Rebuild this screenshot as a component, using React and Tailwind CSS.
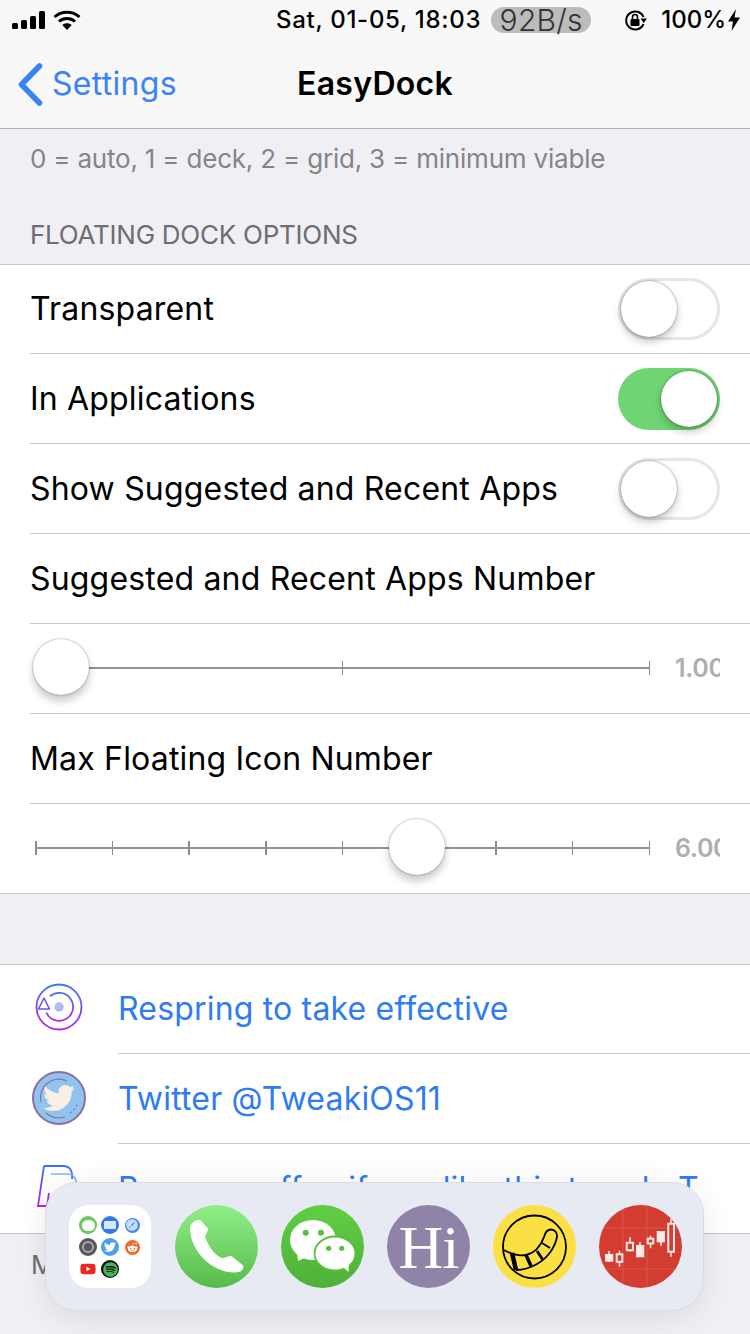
import React from "react";
import { FaTwitter, FaRedditAlien, FaSpotify, FaYoutube, FaSafari } from "react-icons/fa";

const font = { fontFamily: "Inter, 'Noto Sans', sans-serif" };

function Toggle({ on }) {
  return (
    <div className={on ? "relative w-[102px] h-[62px] rounded-full bg-[#6fd572]" : "relative w-[102px] h-[62px] rounded-full border-[3px] border-[#e6e6e6] bg-white"}>
      <div className={on
        ? "absolute top-[3px] right-[3px] w-[56px] h-[56px] rounded-full bg-white shadow-[0_5px_8px_rgba(0,0,0,0.22),0_0_2px_rgba(0,0,0,0.5)]"
        : "absolute top-0 left-0 w-[56px] h-[56px] rounded-full bg-white shadow-[0_5px_8px_rgba(0,0,0,0.22),0_0_2px_rgba(0,0,0,0.5)]"} />
    </div>
  );
}

function Row({ label, children, first }) {
  return (
    <div className={"ml-[30px] flex items-center pr-[30px] border-b border-[#c8c7cc] " + (first ? "h-[89px]" : "h-[90px]")}>
      <span className="flex-1 text-[32px] leading-none tracking-[0.18px] text-black whitespace-nowrap">{label}</span>
      {children}
    </div>
  );
}

function Slider({ ticks, left, value, last }) {
  return (
    <div className={"ml-[30px] flex items-center pr-[30px] pl-[5px] " + (last ? "h-[89px]" : "h-[90px] border-b border-[#c8c7cc]")}>
      <div className="relative w-[615px] h-[14px] mb-[2px] flex justify-between items-center">
        <div className="absolute left-0 right-0 top-[6px] h-[2px] bg-[#939393]" />
        {ticks.map((t, i) => (
          <div key={i} className={"w-[1.5px] h-[14px] " + (t ? "bg-[#8a8a8a]" : "bg-transparent")} />
        ))}
        <div className={"absolute top-[-22px] w-[56px] h-[56px] rounded-full bg-white shadow-[0_6px_9px_rgba(0,0,0,0.22),0_0_2px_rgba(0,0,0,0.45)] " + left} />
      </div>
      <div className="ml-[25px] w-[45px] overflow-hidden text-[25px] leading-none font-semibold text-[#aeaeb0] whitespace-nowrap tracking-[-0.3px]">{value}</div>
    </div>
  );
}

function Signal() {
  return (
    <svg width="34" height="18" viewBox="0 0 34 18">
      <rect x="0" y="12" width="6" height="6" rx="1.5" />
      <rect x="9" y="9" width="6" height="9" rx="1.5" />
      <rect x="18" y="5" width="6" height="13" rx="1.5" />
      <rect x="27" y="0" width="6" height="18" rx="1.5" />
    </svg>
  );
}

function Wifi() {
  return (
    <svg width="28" height="20" viewBox="0 0 28 20" fill="none" stroke="#000" strokeWidth="3">
      <path d="M1.5 7 C8.5 0.5 19.5 0.5 26.5 7" />
      <path d="M6 11.5 C10.5 7.5 17.5 7.5 22 11.5" />
      <path d="M14 20 L9.3 15 C12 12.7 16 12.7 18.7 15 Z" fill="#000" stroke="none" />
    </svg>
  );
}

function RotLock() {
  return (
    <svg width="23" height="23" viewBox="0 0 23 23">
      <path d="M19.5 8 A9 9 0 1 0 19.5 15" fill="none" stroke="#000" strokeWidth="2" />
      <path d="M16.5 9.5 L23 9.5 L19.7 14 Z" />
      <rect x="6.5" y="10" width="9" height="7" rx="1" />
      <path d="M8.5 10 V8 A2.5 2.5 0 0 1 13.5 8 V10" fill="none" stroke="#000" strokeWidth="1.6" />
    </svg>
  );
}

function StatusBar() {
  return (
    <div className="h-[40px] flex items-center text-black">
      <div className="ml-[12px] flex items-center"><Signal /></div>
      <div className="ml-[7px] flex items-center"><Wifi /></div>
      <span className="ml-[195px] text-[24px] leading-none font-medium tracking-[0.7px] whitespace-nowrap">Sat, 01-05, 18:03</span>
      <span className="ml-[10px] w-[100px] h-[26px] rounded-[13px] bg-[#bcbcbc] text-[#333] text-[30px] leading-[26px] font-light tracking-[0.3px] text-center whitespace-nowrap">92B/s</span>
      <div className="ml-[33px] flex items-center"><RotLock /></div>
      <span className="ml-[14px] text-[24px] leading-none font-medium whitespace-nowrap">100%</span>
      <svg className="ml-[2px]" width="12" height="22" viewBox="0 0 12 22"><path d="M8 0 L0 12.5 H5 L3.5 22 L12 8.5 H6.5 Z" /></svg>
    </div>
  );
}

function NavBar() {
  return (
    <div className="h-[129px] bg-[#f8f8f8] border-b border-[#b2b2b2]">
      <StatusBar />
      <div className="h-[88px] grid grid-cols-[1fr_auto_1fr] items-center">
        <div className="flex items-center pl-[18px] text-[#3b82f6]">
          <svg width="25" height="43" viewBox="0 0 25 43" fill="none" stroke="#3b82f6" strokeWidth="5.6" strokeLinecap="round" strokeLinejoin="round">
            <path d="M21.5 3 L3.5 21.5 L21.5 40" />
          </svg>
          <span className="ml-[9px] text-[32px] leading-none tracking-[0.3px]">Settings</span>
        </div>
        <span className="text-[32px] leading-none font-semibold tracking-[0.27px] text-black">EasyDock</span>
        <div />
      </div>
    </div>
  );
}

function RespringIcon() {
  return (
    <svg width="50" height="50" viewBox="0 0 50 50" fill="none">
      <defs>
        <linearGradient id="rg" x1="0" y1="0" x2="0" y2="1">
          <stop offset="0" stopColor="#4272f7" />
          <stop offset="1" stopColor="#b22be8" />
        </linearGradient>
        <linearGradient id="rd" x1="0" y1="0" x2="1" y2="1">
          <stop offset="0" stopColor="#a8cdf9" />
          <stop offset="1" stopColor="#bcaaf7" />
        </linearGradient>
      </defs>
      <circle cx="25" cy="25" r="22.5" stroke="url(#rg)" strokeWidth="1.8" />
      <path d="M12.3 30.5 A14 14 0 1 0 16 14.2" stroke="url(#rg)" strokeWidth="1.8" />
      <path d="M10 16 L15.5 27 L4.5 27 Z" stroke="#6a55f0" strokeWidth="1.6" strokeLinejoin="round" fill="#fff" />
      <circle cx="25" cy="25" r="4.7" fill="url(#rd)" />
    </svg>
  );
}

function TwitterBadge() {
  return (
    <div className="relative w-[54px] h-[54px] rounded-full bg-[#90c3ee] border-2 border-[#8a6f9c] flex items-center justify-center">
      <svg className="absolute inset-[3px]" viewBox="0 0 44 44" fill="none" stroke="#8a6f9c" strokeWidth="1.1">
        <path d="M4 26 A18.5 18.5 0 0 1 30 5" />
        <path d="M9 37 A20 20 0 0 0 28 41" />
        <path d="M33 37 A19 19 0 0 0 41 27" strokeDasharray="2 2.5" />
      </svg>
      <FaTwitter className="relative text-[#f8f0e4] text-[32px]" />
    </div>
  );
}

function PaypalIcon() {
  return (
    <svg width="44" height="46" viewBox="0 0 44 46" fill="none">
      <defs>
        <linearGradient id="pg" x1="0" y1="0" x2="0" y2="1">
          <stop offset="0" stopColor="#3a70f6" />
          <stop offset="1" stopColor="#b32be6" />
        </linearGradient>
      </defs>
      <path d="M7 1 H26 C33 1 36 6 35 14 M7 1 L1 41 H10 L12 28" stroke="url(#pg)" strokeWidth="1.8" />
      <path d="M14 9 H30 C37 9 40 14 39 20 C38 26 33 30 26 30 H18" stroke="#7db3f5" strokeWidth="1.6" />
    </svg>
  );
}

function IconRow({ icon, label, last, first, lift }) {
  return (
    <div className={"flex items-center " + (first || last ? "h-[89px]" : "h-[90px]")}>
      <div className={"w-[118px] shrink-0 flex justify-center " + lift}>{icon}</div>
      <div className={"flex-1 min-w-0 h-full flex items-center " + (last ? "" : "border-b border-[#c8c7cc]")}>
        <span className="text-[32px] leading-none tracking-[0.18px] text-[#2f7bf5] whitespace-nowrap">{label}</span>
      </div>
    </div>
  );
}

function Mini({ children, className }) {
  return <div className={"rounded-full flex items-center justify-center " + className}>{children}</div>;
}

function Folder() {
  return (
    <div className="w-[82px] h-[83px] rounded-[20px] bg-white pl-[8px] pt-[9px] grid grid-cols-[22px_22px_22px] grid-rows-[22px_22px_22px] place-items-center">
      <Mini className="w-[18px] h-[18px] bg-[#68c860]"><div className="w-[13px] h-[11px] rounded-full bg-white" /></Mini>
      <Mini className="w-[18px] h-[18px] bg-[#2f7be8]"><div className="w-[12px] h-[8px] bg-[#d9e8fb] rounded-[1px]" /></Mini>
      <Mini className="w-[15px] h-[15px] bg-[#3f87ea]"><FaSafari className="text-[#cfe3fb] text-[12px]" /></Mini>
      <Mini className="w-[18px] h-[18px] bg-[#58585c]"><div className="w-[12px] h-[12px] rounded-full border-2 border-[#a9a9ad]" /></Mini>
      <Mini className="w-[18px] h-[18px] bg-[#4a9eea]"><FaTwitter className="text-white text-[12px]" /></Mini>
      <Mini className="w-[15px] h-[15px] bg-[#ee6a2c]"><FaRedditAlien className="text-white text-[11px]" /></Mini>
      <FaYoutube className="text-[#ea2a22] text-[16px]" />
      <Mini className="w-[18px] h-[18px] bg-[#111]"><FaSpotify className="text-[#47b258] text-[15px]" /></Mini>
      <div />
    </div>
  );
}

function Phone() {
  return (
    <svg width="83" height="83" viewBox="0 0 83 83">
      <defs>
        <linearGradient id="ph" x1="0" y1="0" x2="0" y2="1">
          <stop offset="0" stopColor="#8ff08a" />
          <stop offset="1" stopColor="#57ba48" />
        </linearGradient>
      </defs>
      <circle cx="41.5" cy="41.5" r="41.5" fill="url(#ph)" />
      <path fill="#fff" d="M15 21.7 C15 28 16 33 18.3 38.3 C21 45 26 52 31.7 56.7 C37 61 44 65 51.7 66.7 C56 67.5 61 67.8 65 66.7 C67 65.5 68.3 64 68.3 62.3 C68.5 61 68 60.4 67.7 60 L57 51.5 C56 50.7 55 50.7 54 51.2 L47.7 53.3 C44 52 41 49.5 38.3 46.7 C35 43 32 37 30 31.7 L32.7 25.5 C33 24.5 33 24 32.5 23 L26 15.7 C25 14.8 24 14.6 22.5 15 C19 16 16 18.5 15 21.7 Z" />
    </svg>
  );
}

function WeChat() {
  return (
    <svg width="83" height="83" viewBox="0 0 83 83">
      <defs>
        <linearGradient id="wc" x1="0" y1="0" x2="0" y2="1">
          <stop offset="0" stopColor="#5fcf44" />
          <stop offset="1" stopColor="#4fb038" />
        </linearGradient>
      </defs>
      <circle cx="41.5" cy="41.5" r="41.5" fill="url(#wc)" />
      <ellipse cx="32" cy="35" rx="23" ry="20" fill="#fff" />
      <path d="M16 47 L17 56 L28 51 Z" fill="#fff" />
      <ellipse cx="54" cy="48.5" rx="20.5" ry="17" fill="#fff" stroke="#58c03f" strokeWidth="1.8" />
      <path d="M62 62 L67.5 67 L68 58 Z" fill="#fff" />
      <circle cx="24.7" cy="27.7" r="3" fill="#58c03f" />
      <circle cx="40" cy="27.7" r="3" fill="#58c03f" />
      <circle cx="47.7" cy="43.3" r="2.6" fill="#58c03f" />
      <circle cx="60.7" cy="43.3" r="2.6" fill="#58c03f" />
    </svg>
  );
}

function Tiger() {
  return (
    <svg width="83" height="83" viewBox="0 0 83 83">
      <circle cx="41.5" cy="41.5" r="41.5" fill="#fbe044" />
      <circle cx="41.5" cy="42" r="31.5" fill="none" stroke="#000" strokeWidth="1.8" />
      <path fill="none" stroke="#000" strokeWidth="1.8" d="M11 45 C20 50 28 51 33 50 C42 48 48 40 51 32 C52 28 54 24.5 58 24.5 C62 24.5 64.5 28 64 32 C62 42 55 53 44 59 C37 63 30 65 23 65" />
      <path stroke="#000" strokeWidth="4.5" d="M19 48 L23 65" />
      <path stroke="#000" strokeWidth="3.5" d="M33 50 L38 61" />
      <path stroke="#000" strokeWidth="2.8" d="M44 46 L50 55" />
      <path stroke="#000" strokeWidth="2" d="M49 38 L57 43" />
    </svg>
  );
}

function Stock() {
  const filled = [[6, 49, 8.3, 7.7, 10, 46, 57], [37, 40, 8.3, 12.3, 41, 37, 52], [57.7, 26, 8.3, 11.3, 62, 26, 40.7]];
  const hollow = [[17.7, 49.3, 5.6, 7.5, 20.5, 45.7, 61.7], [27.7, 37.7, 6.3, 7.5, 31, 32.3, 46.7], [48.7, 33.7, 5.6, 4.8, 51.5, 30.7, 43.3], [69.3, 18.7, 5.7, 28, 72, 13.3, 51.7]];
  return (
    <svg width="83" height="83" viewBox="0 0 83 83">
      <defs>
        <clipPath id="sc"><circle cx="41.5" cy="41.5" r="41.5" /></clipPath>
      </defs>
      <g clipPath="url(#sc)">
        <rect width="83" height="83" fill="#d33d31" />
        <path d="M0 23 H83 M0 64 H83 M24 0 V83 M48 0 V83" stroke="#dc5449" strokeWidth="1" />
        {filled.map((c, i) => (
          <g key={i}>
            <path d={`M${c[4]} ${c[5]} V${c[6]}`} stroke="#fdeae7" strokeWidth="1.5" />
            <rect x={c[0]} y={c[1]} width={c[2]} height={c[3]} fill="#fdeae7" />
          </g>
        ))}
        {hollow.map((c, i) => (
          <g key={i}>
            <path d={`M${c[4]} ${c[5]} V${c[6]}`} stroke="#fdeae7" strokeWidth="1.5" />
            <rect x={c[0]} y={c[1]} width={c[2]} height={c[3]} fill="#d33d31" stroke="#fdeae7" strokeWidth="2" />
          </g>
        ))}
      </g>
    </svg>
  );
}

function Dock() {
  return (
    <div className="absolute left-[45px] top-[1182px] w-[659px] h-[129px] rounded-[32px] bg-[#e8eaf3] border border-[#dcdce2] shadow-[0_6px_30px_rgba(0,0,0,0.09)] flex items-start pt-[22px] pl-[23px]">
      <Folder />
      <div className="ml-[24px] flex gap-[23px]">
        <Phone />
        <WeChat />
        <div className="w-[83px] h-[83px] rounded-full bg-[#8f84a8] flex items-center justify-center text-white text-[62px] leading-none tracking-[-1px]" style={{ fontFamily: "'Liberation Serif', serif" }}>Hi</div>
        <Tiger />
        <Stock />
      </div>
    </div>
  );
}

export default function App() {
  return (
    <div className="relative w-[750px] h-[1334px] overflow-hidden bg-[#efeff4]" style={font}>
      <NavBar />
      <p className="mt-[17px] ml-[30px] text-[26px] leading-[26px] tracking-[-0.2px] text-[#858589] whitespace-nowrap">0 = auto, 1 = deck, 2 = grid, 3 = minimum viable</p>
      <p className="mt-[50px] ml-[30px] text-[26px] leading-[26px] tracking-[-0.25px] text-[#6d6d72] whitespace-nowrap">FLOATING DOCK OPTIONS</p>
      <div className="mt-[16px] bg-white border-y border-[#c8c7cc]">
        <Row first label="Transparent"><Toggle /></Row>
        <Row label="In Applications"><Toggle on /></Row>
        <Row label="Show Suggested and Recent Apps"><Toggle /></Row>
        <Row label="Suggested and Recent Apps Number" />
        <Slider ticks={[0, 1, 1]} left="left-[-2px]" value="1.00" />
        <Row label="Max Floating Icon Number" />
        <Slider ticks={[1, 1, 1, 1, 1, 0, 1, 1, 1]} left="left-[354px]" value="6.00" last />
      </div>
      <div className="mt-[70px] bg-white border-y border-[#c8c7cc]">
        <IconRow first lift="mb-[5px]" icon={<RespringIcon />} label="Respring to take effective" />
        <IconRow lift="mb-[2px]" icon={<TwitterBadge />} label="Twitter @TweakiOS11" />
        <IconRow last lift="mb-[2px]" icon={<PaypalIcon />} label="Buy me coffee if you like this tweak, T" />
      </div>
      <p className="mt-[18px] ml-[31px] text-[26px] leading-[26px] text-[#6d6d72] whitespace-nowrap">More</p>
      <Dock />
    </div>
  );
}
